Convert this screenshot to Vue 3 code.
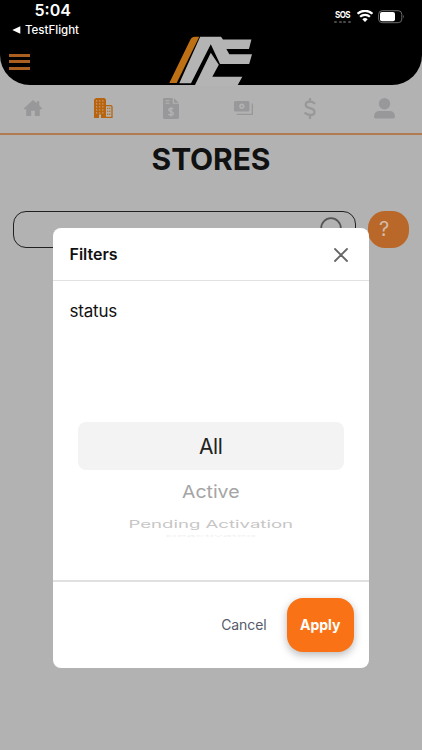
<script setup>
import { ref } from 'vue'

const tabs = ['home', 'stores', 'invoices', 'cash', 'billing', 'profile']
const activeTab = ref('stores')

const statuses = [
  { label: 'All', cls: 'is-selected' },
  { label: 'Active', cls: 'is-near' },
  { label: 'Pending Activation', cls: 'is-far' },
  { label: 'Deactivated', cls: 'is-edge' },
]
</script>

<template>
  <div class="screen">
    <header class="top">
      <div class="status-bar">
        <div class="clock">
          <span class="time">5:04</span>
          <span class="back"><svg width="9" height="8" viewBox="0 0 9 8"><path d="M8.3 .3v7.4L.3 4z" fill="#fff" /></svg>TestFlight</span>
        </div>
        <div class="signals">
          <div class="sos">
            <span>SOS</span>
            <i class="dots"><b v-for="n in 4" :key="n" /></i>
          </div>
          <svg class="wifi" width="16" height="12" viewBox="0 0 16 12">
            <path d="M.6 3.8a10.7 10.7 0 0 1 14.8 0" stroke="#fff" stroke-width="2.2" fill="none" />
            <path d="M3.1 6.8a7 7 0 0 1 9.8 0" stroke="#fff" stroke-width="2.2" fill="none" />
            <path d="M5.3 9.2a3.9 3.9 0 0 1 5.4 0L8 12z" fill="#fff" />
          </svg>
          <svg class="battery" width="27" height="14" viewBox="0 0 27 14">
            <rect x=".6" y=".7" width="23.2" height="12" rx="3.6" fill="none" stroke="#6c6c6c" />
            <rect x="2" y="2.1" width="15" height="9.2" rx="2" fill="#fff" />
            <path d="M25 4.8q1.6 1.8 0 3.8z" fill="#6c6c6c" />
          </svg>
        </div>
      </div>
      <div class="brand-bar">
        <button class="burger" aria-label="Menu"><i /><i /><i /></button>
        <svg class="logo" width="84" height="50" viewBox="169 35.5 84 50">
          <path d="M169.3 82.5 190.2 39.6Q191.8 36.3 195 36.3H199.3L176.7 82.5z" fill="#be7015" />
          <path d="M179.3 82.7 200.2 36.3H221L223 39H251.4L249 48.4H226.4L229.3 53.8H252L249.2 63.4H220L210.8 43.7 191 82.7z" fill="#b4b4b4" />
          <path d="M210.8 52.2 218.8 64.3 212.3 76.3H242.3L237.2 85.5H194.5z" fill="#b4b4b4" />
        </svg>
      </div>
    </header>

    <nav class="tabs">
      <a v-for="tab in tabs" :key="tab" :class="['tab', tab, { active: tab === activeTab }]">
        <svg v-if="tab === 'home'" width="18" height="17" viewBox="0 0 18 17">
          <path d="M9 0 12.8 3.3V1.2H15.3V5.5L18 8.2V9.2H15.8V16H10.8V10.8H7.2V16H2.2V9.2H0V8.2z" />
        </svg>
        <svg v-else-if="tab === 'stores'" width="19" height="20" viewBox="0 0 19 20">
          <path d="M2 0H10.5L12 1.5V20H7V16.5H5V20H0V1.5z" />
          <path d="M12 7.6H17L18 8.6V19.3H12" fill="none" stroke="currentColor" stroke-width="1.3" />
          <g fill="#c9a582">
            <template v-for="r in 5" :key="r">
              <rect v-for="c in 3" :key="c" :x="c * 3.1 - 1.1" :y="r * 3 - .7" width="1.2" height="1.2" />
            </template>
          </g>
          <g>
            <template v-for="r in 3" :key="r">
              <rect v-for="c in 2" :key="c" :x="c * 2.1 + 11.1" :y="r * 2.9 + 6.8" width="1.1" height="1.5" />
            </template>
          </g>
        </svg>
        <svg v-else-if="tab === 'invoices'" width="16" height="21" viewBox="0 0 16 21">
          <path d="M1.3 0H9.7V5.8H16V19.6Q16 21 14.7 21H1.3Q0 21 0 19.6V1.3Q0 0 1.3 0z" />
          <path d="M11 .3 15.7 4.7H11z" />
          <path d="M2.5 2.7H6.5M2.5 5.2H6.5" stroke="#b2b2b2" stroke-width="1.1" />
          <path d="M10.2 11.2Q9.6 10.3 8 10.3 5.8 10.3 5.8 12 5.8 13.1 8 13.6 10.4 14.1 10.4 15.5 10.4 17.1 8 17.1 6.3 17.1 5.5 16M8 9V18.4" fill="none" stroke="#b2b2b2" stroke-width="1.3" />
        </svg>
        <svg v-else-if="tab === 'cash'" width="19" height="15" viewBox="0 0 19 15">
          <path d="M1.5 0H14Q15.5 0 15.5 1.5V9Q15.5 10.5 14 10.5H1.5Q0 10.5 0 9V1.5Q0 0 1.5 0z" />
          <circle cx="7.8" cy="5.2" r="2.6" fill="#b2b2b2" />
          <circle cx="7.8" cy="5.2" r="1" />
          <path d="M18.3 2.5V13.3H2.7" fill="none" stroke="currentColor" stroke-width="1.3" />
        </svg>
        <svg v-else-if="tab === 'billing'" width="12" height="21" viewBox="0 0 12 21">
          <path d="M10.3 5.2Q8.6 3.6 5.8 3.6 1.7 3.6 1.7 6.7 1.7 9.2 5.9 10.1 10.5 11 10.5 13.9 10.5 17 6.2 17 3.2 17 1.3 15.2M6 1V3.5M6 17V20" fill="none" stroke="currentColor" stroke-width="2.3" stroke-linecap="round" />
        </svg>
        <svg v-else width="21" height="21" viewBox="0 0 21 21">
          <circle cx="10.5" cy="5.8" r="5.7" />
          <path d="M4.7 13H16.3Q21 13.5 21 18.8 21 20.5 19.3 20.5H1.7Q0 20.5 0 18.8 0 13.5 4.7 13z" />
        </svg>
      </a>
    </nav>

    <main class="page">
      <h1>STORES</h1>
      <div class="search-row">
        <div class="search">
          <svg width="26" height="28" viewBox="0 0 26 28" fill="none" stroke="#555" stroke-width="1.8">
            <circle cx="11" cy="11" r="9.8" /><path d="m18 18 7 7" />
          </svg>
        </div>
        <button class="help">?</button>
      </div>
    </main>

    <section class="modal" role="dialog">
      <header class="modal-head">
        <h2>Filters</h2>
        <button class="close" aria-label="Close">
          <svg width="14" height="14" viewBox="0 0 14 14"><path d="m1 1 12 12M13 1 1 13" stroke="#666" stroke-width="1.8" stroke-linecap="round" /></svg>
        </button>
      </header>
      <div class="modal-body">
        <p class="field">status</p>
        <div class="wheel">
          <div v-for="s in statuses" :key="s.label" :class="['option', s.cls]">
            <span>{{ s.label }}</span>
          </div>
        </div>
      </div>
      <footer class="modal-foot">
        <button class="cancel">Cancel</button>
        <button class="apply">Apply</button>
      </footer>
    </section>
  </div>
</template>

<style>
body {
  background: #b2b2b2;
}
</style>

<style scoped>
* {
  box-sizing: border-box;
}

.screen {
  position: relative;
  height: 750px;
  overflow: hidden;
  background: #b2b2b2;
  color: #111;
  font-family: Inter, 'Liberation Sans', sans-serif;
}

button {
  border: 0;
  padding: 0;
  background: none;
  font-family: inherit;
}

svg {
  display: block;
}

.top {
  height: 85px;
  background: #000;
  border-radius: 0 0 30px 30px;
  color: #fff;
}

.status-bar {
  display: flex;
  justify-content: space-between;
  height: 36px;
}

.clock {
  display: flex;
  flex-direction: column;
  padding-left: 12px;
}

.time {
  height: 20px;
  padding-left: 22.5px;
  font-size: 16px;
  font-weight: 600;
  line-height: 20px;
}

.back {
  display: flex;
  align-items: center;
  gap: 4px;
  font-size: 11.5px;
  font-weight: 500;
  line-height: 20px;
}

.signals {
  display: flex;
  padding: 10px 17px 0 0;
}

.sos {
  width: 17px;
  margin-right: 6px;
  font-size: 8px;
  font-weight: 700;
  line-height: 10px;
  text-align: center;
}

.sos span {
  display: block;
  letter-spacing: -0.6px;
  transform: scaleY(1.15);
}

.dots {
  display: flex;
  justify-content: space-between;
  padding-top: 1px;
}

.dots b {
  width: 3px;
  height: 2px;
  border-radius: 1px;
  background: #4a4a4a;
}

.wifi {
  margin-right: 5px;
}

.brand-bar {
  display: flex;
  align-items: flex-start;
  padding-left: 9px;
}

.burger {
  display: flex;
  flex-direction: column;
  gap: 3.3px;
  width: 21px;
  margin: 18px 139px 0 0;
}

.burger i {
  height: 3px;
  background: #a95f20;
}

.tabs {
  display: grid;
  grid-template-columns: 66px 75px 60px 85px 48px 88px;
  align-items: center;
  height: 50px;
  padding-bottom: 2px;
  border-bottom: 2px solid #b27b4f;
}

.tab {
  display: flex;
  justify-content: center;
  color: #98989b;
}

.tab svg {
  fill: currentColor;
}

.tab.active {
  color: #b8640f;
}

.tab.profile {
  padding-left: 13px;
}

h1 {
  margin: 6px 0 0;
  font-size: 30px;
  font-weight: 700;
  line-height: 36px;
  text-align: center;
  letter-spacing: -0.1px;
}

.search-row {
  display: flex;
  justify-content: space-between;
  padding: 34px 13px 0 12.5px;
}

.search {
  display: flex;
  justify-content: flex-end;
  width: 343.5px;
  height: 37px;
  padding: 5px 9px 0 0;
  border: 1px solid #202020;
  border-radius: 13px;
}

.help {
  width: 41px;
  height: 37px;
  padding: 0 9px 2px 0;
  border-radius: 17px;
  background: #b9682a;
  color: #d3bba8;
  font-size: 20px;
}

/* dialog floats over the dimmed page */
.modal {
  position: absolute;
  left: 53px;
  top: 227.5px;
  display: flex;
  flex-direction: column;
  width: 316px;
  height: 440.5px;
  border-radius: 8px;
  background: #fff;
}

.modal-head {
  display: flex;
  align-items: center;
  justify-content: space-between;
  height: 53.5px;
  padding: 0 21.5px 0 16.5px;
  border-bottom: 1px solid #e2e2e2;
}

h2 {
  margin: 0;
  font-size: 16px;
  font-weight: 600;
}

.close {
  padding-top: 3px;
}

.modal-body {
  height: 299px;
  padding: 18px 25.5px 0 16.5px;
}

.field {
  margin: 0;
  font-size: 17px;
  line-height: 24px;
  letter-spacing: -0.2px;
}

.wheel {
  margin: 99px 0 0 8.5px;
}

.option {
  display: flex;
  align-items: center;
  justify-content: center;
}

.option span {
  white-space: nowrap;
}

.is-selected {
  height: 48px;
  border-radius: 8px;
  background: #f3f3f3;
  color: #222;
  font-size: 21px;
}

.is-selected span {
  letter-spacing: -0.4px;
}

.is-near {
  height: 43px;
  color: #a5a5a5;
  font-size: 19.5px;
}

.is-near span {
  transform: scaleY(0.92);
}

.is-far {
  height: 22px;
  color: #c6c6c6;
  font-size: 18.6px;
}

.is-far span {
  transform: scaleY(0.58);
}

.is-edge {
  height: 2px;
  color: #f1f1f1;
  font-size: 16px;
}

.is-edge span {
  transform: scaleY(0.12);
}

.modal-foot {
  display: flex;
  flex: 1;
  align-items: center;
  justify-content: flex-end;
  gap: 20.5px;
  padding: 0 15.5px 1px 0;
  border-top: 2px solid #e0e0e0;
}

.cancel {
  color: #565b69;
  font-size: 14px;
  letter-spacing: -0.1px;
}

.apply {
  width: 66.5px;
  height: 54px;
  border-radius: 16px;
  background: #f97316;
  box-shadow: 0 3px 8px rgba(0, 0, 0, 0.28);
  color: #fff;
  font-size: 14px;
  font-weight: 700;
}
</style>
